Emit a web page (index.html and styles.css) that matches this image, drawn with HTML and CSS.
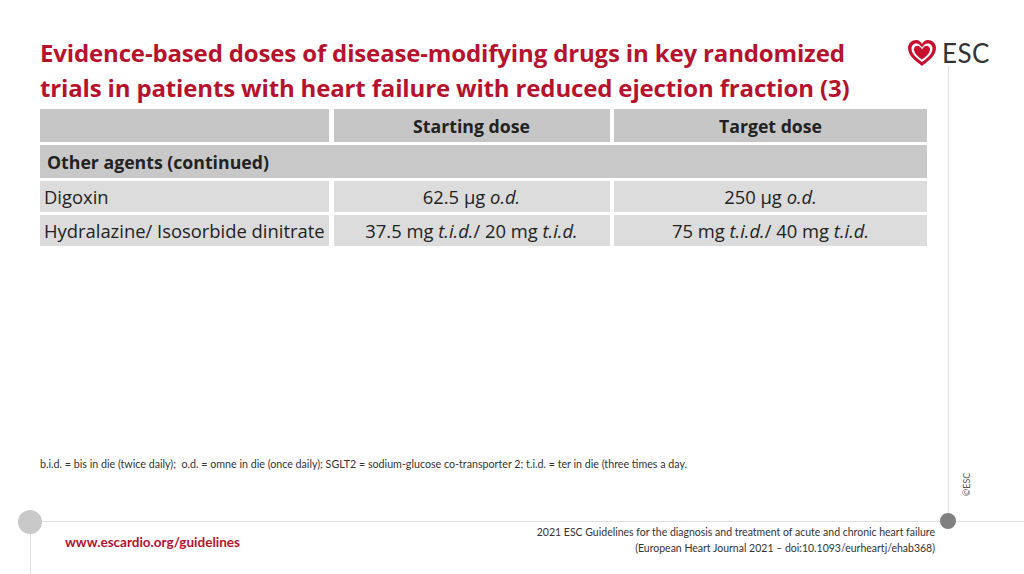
FILE: index.html
```html
<!DOCTYPE html>
<html>
<head>
<meta charset="utf-8">
<link rel="stylesheet" href="styles.css">
</head>
<body>
<div class="slide">
  <div class="deco-hline"></div>
  <div class="deco-vline-left"></div>
  <div class="deco-dot-left"></div>
  <div class="deco-vline-right"></div>
  <div class="deco-dot-right"></div>
  <div class="copy">©ESC</div>

  <header class="header">
    <h1 class="title">Evidence-based doses of disease-modifying drugs in key randomized<br>trials in patients with heart failure with reduced ejection fraction (3)</h1>
    <div class="logo">
      <svg class="heart" viewBox="0 0 30 28" width="30" height="28">
        <path d="M15 27 C9 22 1 17 1 9 C1 4 5 1 9 1 C12 1 14 3 15 5 C16 3 18 1 21 1 C25 1 29 4 29 9 C29 17 21 22 15 27 Z" fill="#c8102e"/>
        <path d="M15 23 C10.5 19.5 4.5 15.5 4.5 9.5 C4.5 6.5 6.8 4.5 9.3 4.5 C11.8 4.5 13.6 6.3 15 8.5 C16.4 6.3 18.2 4.5 20.7 4.5 C23.2 4.5 25.5 6.5 25.5 9.5 C25.5 15.5 19.5 19.5 15 23 Z" fill="#fff"/>
        <path d="M15 20.5 C11.5 17.8 7 14.5 7 10.2 C7 8 8.6 6.8 10.3 6.8 C12.2 6.8 13.8 8.2 15 10.5 C16.2 8.2 17.8 6.8 19.7 6.8 C21.4 6.8 23 8 23 10.2 C23 14.5 18.5 17.8 15 20.5 Z" fill="#c8102e"/>
      </svg>
      <span class="logo-text">ESC</span>
    </div>
  </header>

  <div class="table">
    <div class="cell head"></div>
    <div class="cell head center bold"><span>Starting dose</span></div>
    <div class="cell head center bold"><span>Target dose</span></div>

    <div class="cell section bold"><span>Other agents (continued)</span></div>

    <div class="cell data"><span>Digoxin</span></div>
    <div class="cell data center"><span>62.5 µg <i>o.d.</i></span></div>
    <div class="cell data center"><span>250 µg <i>o.d.</i></span></div>

    <div class="cell data"><span>Hydralazine/ Isosorbide dinitrate</span></div>
    <div class="cell data center"><span>37.5 mg <i>t.i.d.</i>/ 20 mg <i>t.i.d.</i></span></div>
    <div class="cell data center"><span>75 mg <i>t.i.d.</i>/ 40 mg <i>t.i.d.</i></span></div>
  </div>

  <p class="footnote">b.i.d. = bis in die (twice daily);&nbsp; o.d. = omne in die (once daily); SGLT2 = sodium-glucose co-transporter 2; t.i.d. = ter in die (three times a day.</p>

  <footer class="footer">
    <div class="url">www.escardio.org/guidelines</div>
    <div class="ref">2021 ESC Guidelines for the diagnosis and treatment of acute and chronic heart failure<br>(European Heart Journal 2021 – doi:10.1093/eurheartj/ehab368)</div>
  </footer>
</div>
</body>
</html>
```

FILE: styles.css
```css
html, body {
  margin: 0;
  padding: 0;
  background: #fff;
}

.slide {
  position: relative;
  width: 1024px;
  height: 574px;
  overflow: hidden;
  font-family: "Open Sans", Lato, "Liberation Sans", sans-serif;
  color: #222;
  display: flex;
  flex-direction: column;
}

.header {
  display: flex;
  justify-content: space-between;
  align-items: flex-start;
  padding: 35px 34px 0 40px;
}

.title {
  margin: 0;
  font-size: 24px;
  line-height: 35px;
  font-weight: 700;
  color: #b5122e;
  letter-spacing: -0.15px;
  white-space: nowrap;
}

.logo {
  display: flex;
  align-items: center;
  gap: 5px;
  margin-top: 2px;
}

.heart {
  display: block;
}

.logo-text {
  font-family: Lato, "Open Sans", sans-serif;
  font-size: 26px;
  color: #333;
  font-weight: 400;
  letter-spacing: 0.5px;
}

.table {
  display: grid;
  grid-template-columns: 289px 276px 313px;
  grid-template-rows: 33px 33px 31px 31px;
  column-gap: 4.5px;
  row-gap: 3px;
  margin: 4px 0 0 40px;
  width: 887px;
}

.cell {
  display: flex;
  align-items: center;
  font-size: 18.4px;
  padding: 0 4px;
  color: #222;
  white-space: nowrap;
}

.cell.center {
  justify-content: center;
}

.cell.bold {
  font-weight: 700;
  font-size: 17.7px;
}

.cell.head {
  background: #c6c6c6;
}

.cell.section {
  grid-column: 1 / 4;
  background: #c8c8c8;
  padding-left: 7px;
}

.cell.data {
  background: #dcdcdc;
}

.footnote {
  margin: 211px 0 0 40px;
  font-family: Lato, "Open Sans", sans-serif;
  font-size: 10.7px;
  color: #333;
}

.footer {
  display: flex;
  justify-content: space-between;
  align-items: flex-start;
  margin-top: 54px;
  padding: 0 89px 0 65px;
  font-family: Lato, "Open Sans", sans-serif;
}

.url {
  margin-top: 10px;
  font-size: 13.5px;
  font-weight: 700;
  color: #b5122e;
}

.ref {
  text-align: right;
  font-size: 10.5px;
  line-height: 16px;
  color: #333;
}

.deco-hline {
  position: absolute;
  left: 30px;
  right: 0;
  top: 521px;
  height: 1px;
  background: #dedede;
}

.deco-vline-left {
  position: absolute;
  left: 30px;
  top: 522px;
  bottom: 0;
  width: 1px;
  background: #dedede;
}

.deco-dot-left {
  position: absolute;
  left: 18px;
  top: 510px;
  width: 24px;
  height: 24px;
  border-radius: 50%;
  background: #c9c9c9;
}

.deco-vline-right {
  position: absolute;
  left: 948px;
  top: 66px;
  height: 455px;
  width: 1px;
  background: #dedede;
}

.deco-dot-right {
  position: absolute;
  left: 940px;
  top: 513px;
  width: 16px;
  height: 16px;
  border-radius: 50%;
  background: #808080;
}

.copy {
  position: absolute;
  left: 955px;
  top: 479px;
  font-family: Lato, "Open Sans", sans-serif;
  font-size: 9px;
  color: #555;
  transform: rotate(-90deg);
  transform-origin: center;
}
```
